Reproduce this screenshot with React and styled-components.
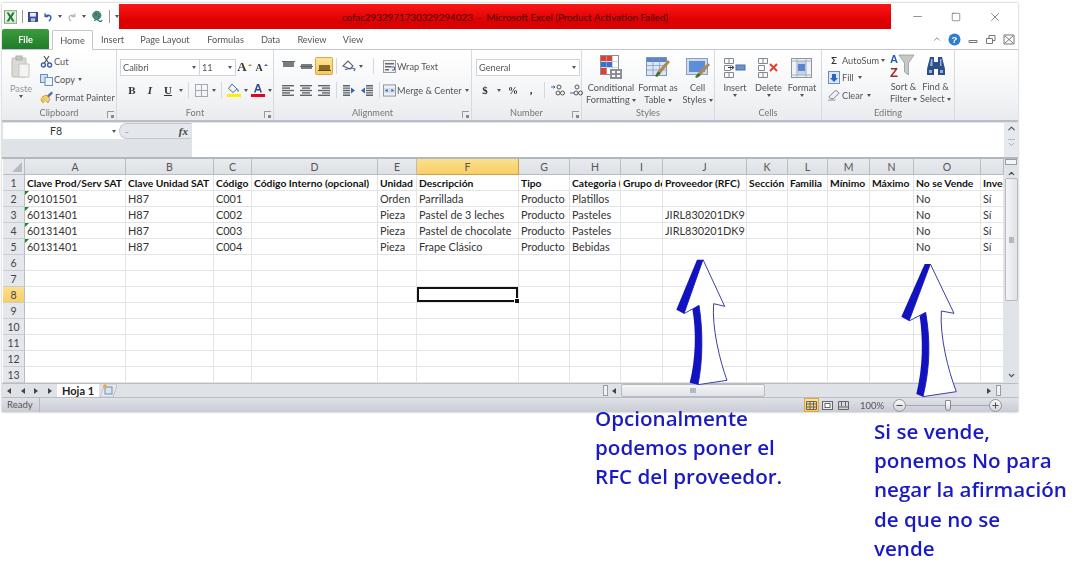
import React from "react"
import styled, { createGlobalStyle } from "styled-components"
import { ChevronUp, ChevronDown, Minus, Plus, X, Square } from "lucide-react"

const Global = createGlobalStyle`
  html, body { margin: 0; padding: 0; background: #fff; }
  body { font-family: "Lato", "Open Sans", sans-serif; overflow: hidden; }
  * { box-sizing: border-box; }
`

const Page = styled.div`
  position: relative;
  width: 1085px;
  height: 576px;
  padding-top: 3px;
  overflow: hidden;
`
const Win = styled.div`
  width: 1016px;
  margin-left: 2px;
  height: 409px;
  display: flex;
  flex-direction: column;
  background: #fff;
  box-shadow: 0 0 2px rgba(0,0,0,.35);
  color: #444;
  font-size: 9.2px;
  filter: blur(0.3px);
`
const TitleBar = styled.div`
  height: 27px;
  display: flex;
  align-items: center;
  flex: none;
`
const Qat = styled.div`
  width: 117px;
  padding-left: 2px;
  display: flex;
  align-items: center;
  gap: 5px;
`
const QatSep = styled.span`
  width: 1px;
  height: 13px;
  background: #999;
`
const RedTitle = styled.div`
  width: 772px;
  height: 25px;
  background: linear-gradient(#fb1616, #dc0000 70%);
  color: #4a0303;
  font-size: 9.8px;
  display: flex;
  align-items: center;
  justify-content: center;
  white-space: pre;
`
const WinBtns = styled.div`
  flex: 1;
  display: flex;
  justify-content: space-around;
  align-items: center;
  padding: 0 2px 0 6px;
  color: #333;
`
const Tabs = styled.div`
  height: 20px;
  flex: none;
  display: flex;
  align-items: flex-end;
  border-bottom: 1px solid #c2c7cd;
`
const FileTab = styled.div`
  width: 47px;
  height: 20px;
  margin-right: 3px;
  background: linear-gradient(#3c9c3c, #1e7d28);
  color: #fff;
  font-size: 9.2px;
  font-weight: 700;
  display: flex;
  align-items: center;
  justify-content: center;
  border-radius: 2px 2px 0 0;
`
const Tab = styled.div`
  height: 20px;
  width: ${p => p.$w}px;
  padding-top: 1px;
  display: flex;
  align-items: center;
  justify-content: center;
  color: #555;
  font-size: 9.2px;
  ${p => p.$on && `
    background: #fff;
    border: 1px solid #c2c7cd;
    border-bottom: 1px solid #fff;
    border-radius: 2px 2px 0 0;
    margin-bottom: -1px;
  `}
`
const TabRight = styled.div`
  margin-left: auto;
  height: 20px;
  display: flex;
  align-items: center;
  gap: 6px;
  padding-right: 3px;
`
const Ribbon = styled.div`
  height: 72px;
  flex: none;
  display: flex;
  background: linear-gradient(#fff, #f4f5f7 60%, #e9ebee);
  border-bottom: 2px solid #b9bec4;
`
const Group = styled.div`
  position: relative;
  width: ${p => p.$w}px;
  flex: none;
  display: flex;
  flex-direction: column;
  border-right: 1px solid #d7dbe0;
`
const GroupBody = styled.div`
  flex: 1;
  min-height: 0;
  display: flex;
  padding: ${p => p.$pad || "0"};
  gap: ${p => p.$gap || 0}px;
`
const GroupLabel = styled.div`
  height: 14px;
  flex: none;
  text-align: center;
  color: #777;
  font-size: 9.2px;
  line-height: 13px;
`
const Launcher = styled.span`
  position: absolute;
  right: 2px;
  bottom: 2px;
  width: 7px;
  height: 7px;
  border: 1px solid #999;
  border-width: 1px 0 0 1px;
  &::after {
    content: "";
    position: absolute;
    right: 0;
    bottom: 0;
    width: 3px;
    height: 3px;
    background: #888;
  }
`
const Caret = styled.span`
  display: inline-block;
  width: 0;
  height: 0;
  margin: 0 ${p => p.$m ?? 3}px;
  border: 2px solid transparent;
  border-top: 3px solid #555;
  border-bottom: 0;
  vertical-align: middle;
`
const UpMark = styled.span`
  width: 0;
  height: 0;
  margin: -5px 0 0 1px;
  border: 2px solid transparent;
  border-top: 0;
  border-bottom: 2px solid ${p => p.$c};
`
const BigBtn = styled.div`
  width: ${p => p.$w}px;
  flex: none;
  display: flex;
  flex-direction: column;
  align-items: center;
  padding-top: ${p => p.$top ?? 5}px;
  color: ${p => p.$dim ? "#999" : "#555"};
  font-size: 9.2px;
  line-height: 12px;
  text-align: center;
  white-space: nowrap;
`
const BigIcon = styled.div`
  height: ${p => p.$h || 25}px;
  margin-bottom: ${p => p.$mb ?? 2}px;
  display: flex;
  align-items: center;
  justify-content: center;
`
const Stack = styled.div`
  display: flex;
  flex-direction: column;
  flex: ${p => p.$flex ? 1 : "none"};
  width: ${p => p.$w ? p.$w + "px" : "auto"};
  padding-top: ${p => p.$top || 0}px;
`
const SmallBtn = styled.div`
  height: ${p => p.$h || 18}px;
  display: flex;
  align-items: center;
  gap: ${p => p.$gap ?? 2}px;
  color: #555;
  font-size: 9.2px;
  white-space: nowrap;
`
const ToolRow = styled.div`
  height: 18px;
  margin-top: ${p => p.$mt || 0}px;
  padding-left: ${p => p.$pl || 0}px;
  display: flex;
  align-items: center;
`
const Tool = styled.div`
  width: ${p => p.$w || 18}px;
  height: 18px;
  flex: none;
  display: flex;
  align-items: center;
  justify-content: center;
  font-family: "Liberation Serif", serif;
  font-weight: 700;
  font-style: ${p => p.$italic ? "italic" : "normal"};
  text-decoration: ${p => p.$under ? "underline" : "none"};
  font-size: ${p => p.$fs || 11}px;
  color: #333;
  ${p => p.$on && `
    background: linear-gradient(#fde49a, #fbc95c);
    border: 1px solid #d9a93f;
    border-radius: 2px;
  `}
`
const VSep = styled.span`
  width: 1px;
  height: 16px;
  margin: 0 ${p => p.$m ?? 3}px;
  background: #d4d7db;
  flex: none;
`
const Select = styled.div`
  width: ${p => p.$w}px;
  height: 17px;
  flex: none;
  display: flex;
  align-items: center;
  justify-content: space-between;
  padding-left: 2px;
  background: #fff;
  border: 1px solid #d0d4d9;
  margin-left: ${p => p.$ml || 0}px;
  color: #555;
  font-size: 9.2px;
`
const FormulaBar = styled.div`
  height: 37px;
  flex: none;
  display: flex;
  background: #dfe3e8;
  border-bottom: 2px solid #b3b8be;
  padding: 1px 0 0 1px;
`
const NameCol = styled.div`
  width: 188px;
  flex: none;
`
const NameBox = styled.div`
  height: 16px;
  display: flex;
  align-items: center;
  background: #fff;
  font-size: 10.5px;
  color: #333;
`
const NameText = styled.div`
  width: 106px;
  text-align: center;
`
const FxWrap = styled.div`
  flex: 1;
  height: 16px;
  display: flex;
  align-items: center;
  justify-content: space-between;
  background: #e4e7eb;
  border-radius: 8px 0 0 8px;
  border: 1px solid #c4c8cd;
  border-width: 1px 0 1px 1px;
  padding: 0 3px 0 5px;
  font-family: "Liberation Serif", serif;
  font-style: italic;
  font-weight: 700;
  font-size: 11px;
  color: #444;
`
const CollapseDash = styled.span`
  color: #aaa;
  font-style: normal;
`
const FormulaInput = styled.div`
  flex: 1;
  background: #fff;
  margin-left: 1px;
`
const SideScroll = styled.div`
  width: 14px;
  flex: none;
  display: flex;
  flex-direction: column;
  align-items: center;
  background: #e6e9ed;
  color: #555;
`
const Sheet = styled.div`
  flex: 1;
  display: flex;
  min-height: 0;
`
const GridWrap = styled.div`
  flex: none;
  width: 1001px;
  display: grid;
  grid-template-columns: ${p => p.$cols};
  grid-auto-rows: 16px;
  overflow: hidden;
  margin-left: 1px;
  background: #fff;
`
const Corner = styled.div`
  background: #e4e7eb;
  border-right: 1px solid #b9bdc3;
  border-bottom: 1px solid #b9bdc3;
  position: relative;
  &::after {
    content: "";
    position: absolute;
    right: 2px;
    bottom: 2px;
    border: 5px solid transparent;
    border-right-color: #b8bcc1;
    border-bottom-color: #b8bcc1;
  }
`
const ColHead = styled.div`
  display: flex;
  align-items: center;
  justify-content: center;
  font-size: 10.5px;
  color: #555;
  background: ${p => p.$on ? "linear-gradient(#fce08a, #f9ce6a)" : "linear-gradient(#e8ebee, #dde0e5)"};
  border-right: 1px solid ${p => p.$on ? "#c8a24a" : "#b9bdc3"};
  border-bottom: 1px solid ${p => p.$on ? "#c8a24a" : "#b9bdc3"};
`
const RowHead = styled.div`
  display: flex;
  align-items: center;
  justify-content: center;
  font-size: 10.5px;
  color: #444;
  background: ${p => p.$on ? "linear-gradient(#fce08a, #f9ce6a)" : "#e4e7eb"};
  border-right: 1px solid #b9bdc3;
  border-bottom: 1px solid #c9cdd2;
`
const Cell = styled.div`
  position: relative;
  padding-left: 2px;
  line-height: 16px;
  font-size: ${p => p.$bold ? 10.3 : 10.9}px;
  font-weight: ${p => p.$bold ? 700 : 400};
  color: ${p => p.$bold ? "#111" : "#333"};
  white-space: nowrap;
  overflow: hidden;
  border-right: 1px solid #e2e4e6;
  border-bottom: 1px solid #e2e4e6;
  ${p => p.$flag && `
    &::before {
      content: "";
      position: absolute;
      left: 0;
      top: 0;
      border: 2.500px solid transparent;
      border-top-color: #0f8a20;
      border-left-color: #0f8a20;
    }
  `}
  ${p => p.$sel && `
    overflow: visible;
    box-shadow: inset 0 0 0 2px #111;
    &::after {
      content: "";
      position: absolute;
      right: -2px;
      bottom: -2px;
      width: 4px;
      height: 4px;
      background: #111;
      border: 1px solid #fff;
    }
  `}
`
const VScroll = styled.div`
  width: 14px;
  flex: none;
  display: flex;
  flex-direction: column;
  align-items: center;
  background: #e0e3e8;
  color: #444;
`
const VSplit = styled.span`
  width: 12px;
  height: 6px;
  margin-bottom: 4px;
  background: #f4f5f7;
  border: 1px solid #9a9ea4;
  flex: none;
`
const Thumb = styled.div`
  width: 13px;
  height: 123px;
  margin-top: 0;
  background: linear-gradient(90deg, #f4f5f7, #dfe2e6);
  border: 1px solid #b7bbc1;
  border-radius: 2px;
  display: flex;
  align-items: center;
  justify-content: center;
  flex: none;
`
const Grip = styled.span`
  width: ${p => p.$w}px;
  height: ${p => p.$h}px;
  margin-top: ${p => p.$mt || 0}px;
  background: #b5b9bf;
  flex: none;
`
const DownEnd = styled.div`
  margin-top: auto;
  margin-bottom: 3px;
  display: flex;
`
const SheetBar = styled.div`
  height: 14px;
  flex: none;
  display: flex;
  align-items: center;
  background: #dfe3e8;
  border-top: 1px solid #b9bdc3;
`
const SheetNav = styled.div`
  width: 50px;
  padding-left: 5px;
  display: flex;
  justify-content: space-between;
  flex: none;
`
const Tri = styled.span`
  width: 0;
  height: 0;
  flex: none;
  margin-left: ${p => p.$ml || 0}px;
  border: 3px solid transparent;
  ${p => p.$left ? "border-right: 4px solid #444; border-left: 0;" : "border-left: 4px solid #444; border-right: 0;"}
`
const SheetTab = styled.div`
  width: 42px;
  height: 14px;
  margin-left: 5px;
  background: #fff;
  color: #222;
  font-weight: 700;
  font-size: 11px;
  text-align: center;
  line-height: 14px;
  flex: none;
`
const AddSheet = styled.div`
  margin-left: 1px;
  flex: none;
  display: flex;
`
const HScrollArea = styled.div`
  margin-left: 486px;
  flex: 1;
  display: flex;
  align-items: center;
  height: 13px;
`
const HSplit = styled.span`
  width: 5px;
  height: 11px;
  margin: ${p => p.$margin || 0};
  background: #f2f3f5;
  border: 1px solid #9a9ea4;
  flex: none;
`
const HThumb = styled.div`
  width: 144px;
  height: 13px;
  margin-left: 5px;
  background: linear-gradient(#f4f5f7, #dfe2e6);
  border: 1px solid #b7bbc1;
  border-radius: 2px;
  display: flex;
  align-items: center;
  justify-content: center;
  flex: none;
`
const Spacer = styled.span`
  flex: 1;
`
const StatusBar = styled.div`
  height: 15px;
  flex: none;
  display: flex;
  align-items: center;
  background: linear-gradient(#dfe3e8, #c9cdd3);
  border-top: 1px solid #b9bdc3;
  font-size: 9.5px;
  color: #555;
`
const Ready = styled.div`
  width: 38px;
  padding-left: 5px;
  height: 100%;
  line-height: 14px;
  border-right: 1px solid #b4b8be;
`
const ViewBtns = styled.div`
  margin-left: auto;
  display: flex;
  align-items: center;
  gap: 1px;
  height: 100%;
`
const ViewBtn = styled.div`
  width: 15px;
  height: 14px;
  display: flex;
  align-items: center;
  justify-content: center;
  ${p => p.$on && "background: linear-gradient(#fde49a, #fbc95c); border: 1px solid #d9a93f;"}
`
const ZoomPct = styled.div`
  margin-left: 9px;
  width: 33px;
`
const ZoomCircle = styled.div`
  width: 13px;
  height: 13px;
  border-radius: 50%;
  border: 1px solid #8f9399;
  background: linear-gradient(#fafafa, #d0d3d8);
  color: #444;
  display: flex;
  align-items: center;
  justify-content: center;
  flex: none;
`
const ZoomTrack = styled.div`
  position: relative;
  width: 83px;
  height: 1px;
  background: #a4a8ae;
  flex: none;
`
const ZoomKnob = styled.span`
  position: absolute;
  left: 39px;
  top: -5px;
  width: 6px;
  height: 11px;
  background: linear-gradient(#fff, #d4d7db);
  border: 1px solid #84888e;
  border-radius: 1px 1px 3px 3px;
`
const ZoomWrap = styled.div`
  display: flex;
  align-items: center;
  padding-right: 16px;
`
const Notes = styled.div`
  display: flex;
  align-items: flex-start;
  padding-left: 595px;
  margin-top: -8px;
  position: relative;
`
const Note = styled.div`
  width: ${p => p.$w}px;
  margin-top: ${p => p.$mt || 0}px;
  flex: none;
  color: #1a1ac4;
  font-family: "Open Sans", sans-serif;
  font-weight: 600;
  font-size: 20.6px;
  line-height: 29.2px;
  white-space: nowrap;
`
const ArrowBox = styled.svg`
  position: absolute;
  left: ${p => p.$x}px;
  top: ${p => p.$y}px;
  overflow: visible;
`
const SumMark = styled.span`
  width: 12px;
  font-weight: 700;
  color: #333;
  text-align: center;
`

const Upward = ({ x, y, w, h, box, head, shaft, body }) => (
  <ArrowBox $x={x} $y={y} width={w} height={h} viewBox={box}>
    <path d={body} fill="#fff" stroke="#3c3cae" strokeWidth="3" />
    <path d={head} fill="#1212c0" />
    <path d={shaft} fill="#1212c0" />
  </ArrowBox>
)

const ExcelLogo = () => (
  <svg width="16" height="16" viewBox="0 0 16 16">
    <rect x=".5" y=".5" width="15" height="15" fill="#e9f3e4" stroke="#5c8f5c" />
    <path d="M3 2.5h3l2 3.6 2-3.6h3L9.6 8 13 13.5h-3l-2-3.6-2 3.6H3L6.4 8z" fill="#1f7a35" />
  </svg>
)
const SaveIcon = () => (
  <svg width="12" height="12" viewBox="0 0 12 12">
    <rect x=".5" y=".5" width="11" height="11" fill="#3c4fa0" stroke="#2a3570" />
    <rect x="2.5" y="1" width="7" height="4.5" fill="#e8ecf6" />
    <rect x="3.5" y="7.5" width="5" height="4" fill="#b8c0dc" />
  </svg>
)
const UndoIcon = () => (
  <svg width="12" height="12" viewBox="0 0 12 12" fill="none">
    <path d="M2.5 1.5v4h4" stroke="#2f5fb0" strokeWidth="1.6" />
    <path d="M2.8 5.2C5 3 9.5 3.5 9.5 7c0 1.8-1 3-2.5 3.8" stroke="#2f5fb0" strokeWidth="1.8" />
  </svg>
)
const RedoIcon = () => (
  <svg width="12" height="12" viewBox="0 0 12 12" fill="none">
    <path d="M9.5 1.5v4h-4" stroke="#b4b8bc" strokeWidth="1.4" />
    <path d="M9.2 5.2C7 3 2.5 3.5 2.5 7c0 1.8 1 3 2.5 3.8" stroke="#b4b8bc" strokeWidth="1.6" />
  </svg>
)
const GlobeIcon = () => (
  <svg width="16" height="16" viewBox="0 0 16 16">
    <circle cx="7" cy="6" r="5" fill="#4f8f5a" stroke="#2f6a80" />
    <path d="M4 3.5 7 3l1 2-2 2zM8 7l2-1 .8 1.5L9 9z" fill="#2e6ab0" />
    <path d="M4 12.5c2-1.8 3.6-1.8 5.5 0s3 .8 4-.6" fill="none" stroke="#3b6fa0" strokeWidth="1.6" />
  </svg>
)
const PasteIcon = () => (
  <svg width="20" height="24" viewBox="0 0 20 24">
    <rect x="1" y="3" width="14" height="19" rx="1" fill="#d9d9d6" stroke="#bdbdb9" />
    <rect x="5" y="1" width="6" height="4" fill="#c6c6c2" stroke="#aeaeaa" />
    <path d="M8 9h10v13H8z" fill="#f4f4f2" stroke="#c4c4c2" />
  </svg>
)
const CutIcon = () => (
  <svg width="13" height="13" viewBox="0 0 13 13" fill="none">
    <path d="M4 1l4.6 7M9 1 4.4 8" stroke="#555" strokeWidth="1.2" />
    <circle cx="3.4" cy="10" r="2" stroke="#3b62a8" strokeWidth="1.4" />
    <circle cx="9.6" cy="10" r="2" stroke="#3b62a8" strokeWidth="1.4" />
  </svg>
)
const CopyIcon = () => (
  <svg width="13" height="13" viewBox="0 0 13 13">
    <rect x=".5" y="1.5" width="7" height="8" fill="#cfe0f4" stroke="#6a8fbc" />
    <rect x="5" y="4.5" width="7.5" height="8" fill="#eef4fb" stroke="#6a8fbc" />
  </svg>
)
const PainterIcon = () => (
  <svg width="14" height="13" viewBox="0 0 14 13">
    <path d="M1 6.5 5 10.5 3 12.5 0.5 9.5z" fill="#e8b23a" />
    <path d="M2 6l4-2 4 4-2 4z" fill="#f4d36a" stroke="#a87e1e" strokeWidth=".6" />
    <path d="M7 4.5 11.5.5l1.5 1.5L9 6.5z" fill="#5a6ea0" />
  </svg>
)
const Bars = ({ rows }) => (
  <svg width="13" height="11" viewBox="0 0 13 11">
    {rows.map(([x, y, w, h, c], i) => <rect key={i} x={x} y={y} width={w} height={h} fill={c || "#60656c"} />)}
  </svg>
)
const barFill = "#787d84"
const AlignTop = () => <Bars rows={[[1, 1, 11, 5, barFill], [0, 0, 13, 1]]} />
const AlignMid = () => <Bars rows={[[1, 3, 11, 5, barFill], [0, 5, 13, 1]]} />
const AlignBot = () => <Bars rows={[[1, 4, 11, 5, "#8a6a20"], [0, 9, 13, 1, "#5a4a20"]]} />
const AlignL = () => <Bars rows={[[0, 0, 12, 1.4], [0, 2.4, 8, 1.4], [0, 4.8, 12, 1.4], [0, 7.2, 8, 1.4], [0, 9.6, 12, 1.4]]} />
const AlignC = () => <Bars rows={[[0, 0, 12, 1.4], [2, 2.4, 8, 1.4], [0, 4.8, 12, 1.4], [2, 7.2, 8, 1.4], [0, 9.6, 12, 1.4]]} />
const AlignR = () => <Bars rows={[[0, 0, 12, 1.4], [4, 2.4, 8, 1.4], [0, 4.8, 12, 1.4], [4, 7.2, 8, 1.4], [0, 9.6, 12, 1.4]]} />
const Indent = ({ flip }) => (
  <svg width="12" height="11" viewBox="0 0 12 11">
    <g transform={flip ? "translate(12 0) scale(-1 1)" : undefined}>
      <path d="M5 0h7v1.4H5zM5 2.4h7v1.4H5zM5 4.8h7v1.4H5zM5 7.2h7v1.4H5zM5 9.6h7V11H5z" fill="#5c6168" />
      <path d="M0 5.5 4 2.5v6z" fill="#3c64ac" />
    </g>
  </svg>
)
const Orient = () => (
  <svg width="14" height="12" viewBox="0 0 14 12" fill="none">
    <path d="M1 6 6 1l5 5-3 3z" stroke="#666" strokeWidth="1.1" />
    <path d="M3 9.5l7-1.5 3 1-1 2" stroke="#3c64ac" strokeWidth="1.2" />
  </svg>
)
const WrapIcon = () => (
  <svg width="13" height="13" viewBox="0 0 13 13">
    <rect x=".5" y=".5" width="12" height="12" fill="#f2f2f2" stroke="#9a9a9a" />
    <path d="M2 3h9v1.5H2zM2 6h6v1.5H2zM2 9h4v1.5H2z" fill="#6a6a6a" />
    <path d="M8 7h3.5v3H9" stroke="#3c64ac" fill="none" />
  </svg>
)
const MergeIcon = () => (
  <svg width="13" height="13" viewBox="0 0 14 13">
    <rect x=".5" y=".5" width="13" height="12" fill="#eef0f2" stroke="#8a8f96" />
    <rect x="1" y="4" width="12" height="5" fill="#cfdcef" />
    <path d="M2 6.5 5 5v3zM12 6.5 9 5v3z" fill="#3c64ac" />
  </svg>
)
const BorderIcon = () => (
  <svg width="13" height="13" viewBox="0 0 13 13" fill="none" stroke="#a4a8ae">
    <rect x=".5" y=".5" width="12" height="12" />
    <path d="M6.5 .5v12M.5 6.5h12" />
  </svg>
)
const FillColor = () => (
  <svg width="14" height="14" viewBox="0 0 14 14">
    <path d="M5 1 10 6 6 9.500 1.500 5.500z" fill="#f0f2f5" stroke="#4a6fa8" />
    <path d="M10.500 5.500c1 1.500 1.800 2.300 1 3-.9.500-1.600-.5-1-3z" fill="#3c64ac" />
    <rect x="0" y="11" width="14" height="3" fill="#ffee00" />
  </svg>
)
const FontColor = () => (
  <svg width="14" height="14" viewBox="0 0 14 14">
    <path d="M6 1h2l3 8.500H9.300L8.700 7.500H5.300L4.700 9.500H3zM5.800 6h2.400L7 2.800z" fill="#2a4d8f" />
    <rect x="0" y="11" width="14" height="3" fill="#e8001c" />
  </svg>
)
const Decimals = ({ up }) => (
  <svg width="14" height="12" viewBox="0 0 14 12">
    <path d={up ? "M0 3h4l-1.500-1.500M4 3 2.500 4.500" : "M1 9h4"} stroke="#3c64ac" fill="none" />
    <circle cx="8" cy="3" r="2" fill="none" stroke="#555" />
    <circle cx="11.500" cy="9" r="2" fill="none" stroke="#555" />
    <circle cx="7" cy="9" r="2" fill="none" stroke="#555" />
  </svg>
)
const CondFormat = () => (
  <svg width="22" height="25" viewBox="0 0 22 25">
    <rect x=".5" y=".5" width="18" height="19" fill="#fff" stroke="#8a8f96" />
    <rect x="1" y="1" width="5" height="5" fill="#e04030" />
    <rect x="6" y="1" width="6" height="5" fill="#e04030" />
    <rect x="1" y="7" width="11" height="5" fill="#3a70d0" />
    <rect x="1" y="13" width="6" height="6" fill="#e04030" />
    <path d="M6.500 1v18M12.500 1v18M1 6.500h18M1 12.500h18" stroke="#b4b8bd" strokeWidth=".6" />
    <rect x="10" y="14" width="12" height="10" fill="#8a8f96" />
    <path d="M12 16h3v2h-3zM17 16h3v2h-3zM12 20h3v2h-3zM17 20h3v2h-3z" fill="#fff" />
  </svg>
)
const FormatTable = () => (
  <svg width="24" height="24" viewBox="0 0 24 24">
    <rect x=".5" y="1.500" width="20" height="18" fill="#dbe6f6" stroke="#7e94b8" />
    <rect x="1" y="2" width="19" height="4" fill="#5c84c8" />
    <path d="M7 2v17M13.500 2v17M1 9.500h19M1 14h19" stroke="#7e94b8" strokeWidth=".7" />
    <path d="M22 4 24 6 15 17l-3-2z" fill="#b08a50" />
    <path d="M12 15l3 2-4 4-2-1z" fill="#4c6a3c" />
  </svg>
)
const CellStyles = () => (
  <svg width="24" height="24" viewBox="0 0 24 24">
    <rect x=".5" y="2.500" width="21" height="16" fill="#cfdcf0" stroke="#8ba0c0" />
    <rect x="3" y="5" width="16" height="11" fill="#5f8ed8" />
    <path d="M22 7 24 9 15 19l-3-2z" fill="#b08a50" />
    <path d="M12 17l3 2-4 3-2-1z" fill="#4c6a3c" />
  </svg>
)
const CellsIcon = ({ kind }) => (
  <svg width="24" height="22" viewBox="0 0 24 22" fill="none">
    {kind !== "format" && (
      <>
        <path d="M1.500 1.500h9v5h-9zM1.500 15.500h9v5h-9zM1.500 8.500h6v5h-6zM6 15.500v5M6 1.500v5" stroke="#808890" />
        {kind === "insert"
          ? <><rect x="13" y="8" width="9" height="5" fill="#6c90cc" stroke="#4e70a8" /><path d="M5 10.500h6M11 10.500 8.500 8.500M11 10.500 8.500 12.500" stroke="#3a3a3a" /></>
          : <path d="M13 7l7 7M20 7l-7 7" stroke="#e04030" strokeWidth="2" />}
      </>
    )}
    {kind === "format" && (
      <>
        <rect x="1.500" y="1.500" width="20" height="19" fill="#eef1f5" stroke="#8d949c" />
        <rect x="7" y="4" width="9" height="14" fill="#c4d4ec" />
        <rect x="8" y="7" width="7" height="7" fill="#5c84d0" />
        <path d="M7 1.500v19M16 1.500v19M1.500 4h20M1.500 18h20" stroke="#a8aeb6" />
      </>
    )}
  </svg>
)
const FillDown = () => (
  <svg width="12" height="13" viewBox="0 0 12 13">
    <rect x=".5" y=".5" width="11" height="12" fill="#dce8f8" stroke="#6a8fbc" />
    <path d="M4 3h4v4h2L6 11 2 7h2z" fill="#2d62c0" />
  </svg>
)
const Eraser = () => (
  <svg width="12" height="12" viewBox="0 0 13 12">
    <path d="M1 8 7 2c1-1 2-1 3 0l2 2-6 6H3z" fill="#f1eff6" stroke="#6f6f8c" />
    <path d="M0 11.500h8" stroke="#8a8a96" />
  </svg>
)
const SortIcon = () => (
  <svg width="28" height="27" viewBox="0 0 28 27">
    <path d="M9 3h15l-5.500 8v12l-4-3v-9z" fill="#c6c8c8" stroke="#8d9090" strokeWidth=".7" />
    <text x="0" y="11" fontFamily="Liberation Sans, sans-serif" fontWeight="700" fontSize="11" fill="#2f5faa">A</text>
    <text x="0" y="25" fontFamily="Liberation Sans, sans-serif" fontWeight="700" fontSize="13" fill="#a42a2a">Z</text>
  </svg>
)
const Binocs = () => (
  <svg width="20" height="20" viewBox="0 0 20 20">
    <path d="M4 1h4v5h4V1h4l3 12v6h-7v-6H8v6H1v-6z" fill="#2e4f86" />
    <path d="M5 3h1.500v7H4zM14 3h1.500v7H14zM3 14h3v3H3zM14 14h3v3h-3z" fill="#8db0e0" />
  </svg>
)
const HelpIcon = () => (
  <svg width="13" height="13" viewBox="0 0 13 13">
    <circle cx="6.500" cy="6.500" r="6" fill="#2f7cd0" />
    <text x="6.500" y="10" textAnchor="middle" fontSize="9.500" fontWeight="700" fontFamily="Liberation Sans, sans-serif" fill="#fff">?</text>
  </svg>
)
const Glyph = ({ d }) => (
  <svg width="12" height="11" viewBox="0 0 12 11" fill="none" stroke="#777"><path d={d} /></svg>
)
const NewSheet = () => (
  <svg width="17" height="13" viewBox="0 0 17 13">
    <path d="M0 13 5 0h12v1L13 13z" fill="#e8ebee" stroke="#a4a8ae" strokeWidth=".6" />
    <rect x="5" y="3" width="7" height="7" fill="#d8e4f4" stroke="#6a8fbc" />
    <circle cx="5" cy="2.500" r="2" fill="#f0a83a" />
  </svg>
)
const GridView = () => (
  <svg width="11" height="9" viewBox="0 0 11 9" fill="none" stroke="#666"><path d="M.5.5h10v8H.5zM.5 3h10M.5 6h10M4 .5v8M7.500.5v8" /></svg>
)
const PageView = () => (
  <svg width="11" height="9" viewBox="0 0 11 9" fill="#e8eaed" stroke="#666"><rect x=".5" y=".5" width="10" height="8" /><rect x="3" y="2.500" width="5" height="4" fill="#fff" /></svg>
)
const BreakView = () => (
  <svg width="11" height="9" viewBox="0 0 11 9" fill="none" stroke="#666"><path d="M.5.500h10v8H.5zM3.500 .5v5M7.500.5v5M.5 6h10" /></svg>
)

const colNames = "ABCDEFGHIJKLMNOP".split("")
const colWidths = [101, 88, 38, 126, 39, 102, 51, 51, 42, 84, 41, 40, 42, 44, 67, 23]
const data = [
  ["Clave Prod/Serv SAT", "Clave Unidad SAT", "Código", "Código Interno (opcional)", "Unidad", "Descripción", "Tipo", "Categoria (opcional)", "Grupo de", "Proveedor (RFC)", "Sección", "Familia", "Mínimo", "Máximo", "No se Vende", "Inventario"],
  ["90101501", "H87", "C001", "", "Orden", "Parrillada", "Producto", "Platillos", "", "", "", "", "", "", "No", "Sí"],
  ["60131401", "H87", "C002", "", "Pieza", "Pastel de 3 leches", "Producto", "Pasteles", "", "JIRL830201DK9", "", "", "", "", "No", "Sí"],
  ["60131401", "H87", "C003", "", "Pieza", "Pastel de chocolate", "Producto", "Pasteles", "", "JIRL830201DK9", "", "", "", "", "No", "Sí"],
  ["60131401", "H87", "C004", "", "Pieza", "Frape Clásico", "Producto", "Bebidas", "", "", "", "", "", "", "No", "Sí"],
]
const rowNums = Array.from({ length: 13 }, (_, i) => i + 1)

const RibbonGroup = ({ w, label, launcher, pad, gap, children }) => (
  <Group $w={w}>
    <GroupBody $pad={pad} $gap={gap}>{children}</GroupBody>
    <GroupLabel>{label}</GroupLabel>
    {launcher && <Launcher />}
  </Group>
)

export default function App() {
  return (
    <Page>
      <Global />
      <Win>
        <TitleBar>
          <Qat>
            <ExcelLogo />
            <QatSep />
            <SaveIcon />
            <UndoIcon />
            <Caret $m={0} />
            <RedoIcon />
            <Caret $m={0} />
            <GlobeIcon />
            <QatSep />
            <Caret $m={0} />
          </Qat>
          <RedTitle>cofac2932971730329294023  -  Microsoft Excel (Product Activation Failed)</RedTitle>
          <WinBtns>
            <Minus size={13} strokeWidth={1} />
            <Square size={10} strokeWidth={1.2} />
            <X size={14} strokeWidth={1} />
          </WinBtns>
        </TitleBar>
        <Tabs>
          <FileTab>File</FileTab>
          <Tab $on $w={41}>Home</Tab>
          <Tab $w={39}>Insert</Tab>
          <Tab $w={66}>Page Layout</Tab>
          <Tab $w={55}>Formulas</Tab>
          <Tab $w={35}>Data</Tab>
          <Tab $w={48}>Review</Tab>
          <Tab $w={34}>View</Tab>
          <TabRight>
            <ChevronUp size={10} color="#777" />
            <HelpIcon />
            <Glyph d="M2 6.500h8v2H2z" />
            <Glyph d="M1.500 4.500h6v5h-6zM4 4.500v-3h6v5H7.500" />
            <Glyph d="M2 2l8 7M10 2 2 9M1 1h10v9H1z" />
          </TabRight>
        </Tabs>
        <Ribbon>
          <RibbonGroup w={115} label="Clipboard" launcher>
            <BigBtn $w={38} $dim $top={4}>
              <BigIcon $h={26} $mb={3}><PasteIcon /></BigIcon>
              Paste
              <Caret />
            </BigBtn>
            <Stack $top={2}>
              <SmallBtn $gap={1}><CutIcon /> Cut</SmallBtn>
              <SmallBtn $gap={1}><CopyIcon /> Copy <Caret $m={2} /></SmallBtn>
              <SmallBtn $gap={1}><PainterIcon /> Format Painter</SmallBtn>
            </Stack>
          </RibbonGroup>
          <RibbonGroup w={157} label="Font" launcher pad="0 0 0 3px">
            <Stack $top={8} $flex>
              <ToolRow>
                <Select $w={80}>Calibri<Caret /></Select>
                <Select $w={37} $ml={-1}>11<Caret /></Select>
                <Tool $w={17} $fs={13}>A<UpMark $c="#c08a20" /></Tool>
                <Tool $w={17} $fs={10}>A<UpMark $c="#3c64ac" /></Tool>
              </ToolRow>
              <ToolRow $mt={5} $pl={3}>
                <Tool>B</Tool>
                <Tool $italic>I</Tool>
                <Tool $under>U</Tool>
                <Caret $m={2} />
                <VSep />
                <Tool><BorderIcon /></Tool>
                <Caret $m={2} />
                <VSep />
                <Tool><FillColor /></Tool>
                <Caret $m={1} />
                <Tool><FontColor /></Tool>
                <Caret $m={1} />
              </ToolRow>
            </Stack>
          </RibbonGroup>
          <RibbonGroup w={198} label="Alignment" launcher pad="0 0 0 5px">
            <Stack $top={7} $flex>
              <ToolRow>
                <Tool><AlignTop /></Tool>
                <Tool><AlignMid /></Tool>
                <Tool $on><AlignBot /></Tool>
                <VSep />
                <Tool><Orient /></Tool>
                <Caret $m={1} />
                <VSep $m={9} />
                <SmallBtn $gap={1}><WrapIcon /> Wrap Text</SmallBtn>
              </ToolRow>
              <ToolRow $mt={6}>
                <Tool><AlignL /></Tool>
                <Tool><AlignC /></Tool>
                <Tool><AlignR /></Tool>
                <VSep />
                <Tool><Indent flip /></Tool>
                <Tool><Indent /></Tool>
                <VSep />
                <SmallBtn $gap={1}><MergeIcon /> Merge &amp; Center <Caret $m={2} /></SmallBtn>
              </ToolRow>
            </Stack>
          </RibbonGroup>
          <RibbonGroup w={110} label="Number" launcher pad="0 0 0 4px">
            <Stack $top={8} $flex>
              <ToolRow>
                <Select $w={104}>General<Caret /></Select>
              </ToolRow>
              <ToolRow $mt={5}>
                <Tool>$</Tool>
                <Caret $m={3} />
                <Tool $fs={10}>%</Tool>
                <Tool>,</Tool>
                <VSep $m={4} />
                <Tool><Decimals up /></Tool>
                <Tool><Decimals /></Tool>
              </ToolRow>
            </Stack>
          </RibbonGroup>
          <RibbonGroup w={133} label="Styles" pad="0 0 0 4px">
            <BigBtn $w={50}>
              <BigIcon><CondFormat /></BigIcon>
              Conditional
              <span>Formatting <Caret $m={0} /></span>
            </BigBtn>
            <BigBtn $w={44}>
              <BigIcon><FormatTable /></BigIcon>
              Format as
              <span>Table <Caret $m={0} /></span>
            </BigBtn>
            <BigBtn $w={35}>
              <BigIcon><CellStyles /></BigIcon>
              Cell
              <span>Styles <Caret $m={0} /></span>
            </BigBtn>
          </RibbonGroup>
          <RibbonGroup w={107} label="Cells" pad="0 0 0 3px">
            <BigBtn $w={34}>
              <BigIcon><CellsIcon kind="insert" /></BigIcon>
              Insert
              <Caret />
            </BigBtn>
            <BigBtn $w={33}>
              <BigIcon><CellsIcon kind="delete" /></BigIcon>
              Delete
              <Caret />
            </BigBtn>
            <BigBtn $w={34}>
              <BigIcon><CellsIcon kind="format" /></BigIcon>
              Format
              <Caret />
            </BigBtn>
          </RibbonGroup>
          <RibbonGroup w={133} label="Editing" pad="0 0 0 6px">
            <Stack $top={1} $w={60}>
              <SmallBtn $h={18}><SumMark>Σ</SumMark> AutoSum <Caret $m={0} /></SmallBtn>
              <SmallBtn $h={17}><FillDown /> Fill <Caret $m={2} /></SmallBtn>
              <SmallBtn $h={18}><Eraser /> Clear <Caret $m={2} /></SmallBtn>
            </Stack>
            <BigBtn $w={31} $top={2}>
              <BigIcon $h={27}><SortIcon /></BigIcon>
              Sort &amp;
              <span>Filter <Caret $m={0} /></span>
            </BigBtn>
            <BigBtn $w={33} $top={2}>
              <BigIcon $h={27}><Binocs /></BigIcon>
              Find &amp;
              <span>Select <Caret $m={0} /></span>
            </BigBtn>
          </RibbonGroup>
        </Ribbon>
        <FormulaBar>
          <NameCol>
            <NameBox>
              <NameText>F8</NameText>
              <Caret $m={3} />
              <FxWrap>
                <CollapseDash>-</CollapseDash>
                <span>fx</span>
              </FxWrap>
            </NameBox>
          </NameCol>
          <FormulaInput />
          <SideScroll>
            <ChevronUp size={11} strokeWidth={2.5} />
            <Grip $w={7} $h={1} $mt={5} />
            <ChevronDown size={9} strokeWidth={2} color="#999" />
          </SideScroll>
        </FormulaBar>
        <Sheet>
          <GridWrap $cols={`22px ${colWidths.map(w => w + "px").join(" ")}`}>
            <Corner />
            {colNames.map(c => <ColHead key={c} $on={c === "F"}>{c === "P" ? "" : c}</ColHead>)}
            {rowNums.map(n => (
              <React.Fragment key={n}>
                <RowHead $on={n === 8}>{n}</RowHead>
                {colNames.map((c, i) => (
                  <Cell
                    key={c}
                    $bold={n === 1}
                    $flag={i === 0 && n > 1 && n < 6}
                    $sel={c === "F" && n === 8}
                  >
                    {data[n - 1] ? data[n - 1][i] : ""}
                  </Cell>
                ))}
              </React.Fragment>
            ))}
          </GridWrap>
          <VScroll>
            <VSplit />
            <ChevronUp size={9} strokeWidth={3} />
            <Thumb><Grip $w={5} $h={6} /></Thumb>
            <DownEnd><ChevronDown size={9} strokeWidth={3} /></DownEnd>
          </VScroll>
        </Sheet>
        <SheetBar>
          <SheetNav>
            <Tri $left />
            <Tri $left />
            <Tri />
            <Tri />
          </SheetNav>
          <SheetTab>Hoja 1</SheetTab>
          <AddSheet><NewSheet /></AddSheet>
          <HScrollArea>
            <HSplit />
            <Tri $left $ml={4} />
            <HThumb><Grip $w={6} $h={5} /></HThumb>
            <Spacer />
            <Tri />
            <HSplit $margin="0 17px 0 5px" />
          </HScrollArea>
        </SheetBar>
        <StatusBar>
          <Ready>Ready</Ready>
          <ViewBtns>
            <ViewBtn $on><GridView /></ViewBtn>
            <ViewBtn><PageView /></ViewBtn>
            <ViewBtn><BreakView /></ViewBtn>
          </ViewBtns>
          <ZoomPct>100%</ZoomPct>
          <ZoomWrap>
            <ZoomCircle><Minus size={9} strokeWidth={2.5} /></ZoomCircle>
            <ZoomTrack><ZoomKnob /></ZoomTrack>
            <ZoomCircle><Plus size={9} strokeWidth={2.5} /></ZoomCircle>
          </ZoomWrap>
        </StatusBar>
      </Win>
      <Notes>
        <Note $w={279}>Opcionalmente<br />podemos poner el<br />RFC del proveedor.</Note>
        <Note $w={205} $mt={13}>Si se vende,<br />ponemos No para<br />negar la afirmación<br />de que no se<br />vende</Note>
      </Notes>
      <Upward
        x={673.3} y={256.7} w={56.7} h={130} box="100 20 170 390"
        head="M172 28 L190 28 L133 190 L110 178 Z"
        shaft="M178 165 C190 240 190 330 175 403 L150 397 C168 330 170 240 158 177 Z"
        body="M190 28 L255 168 L222 160 C216 230 240 330 262 390 L175 403 C190 330 190 240 178 165 L133 190 Z"
      />
      <Upward
        x={898.3} y={260} w={61.7} h={140} box="775 30 185 420"
        head="M855 42 L872 42 L808 213 L785 200 Z"
        shaft="M858 187 C872 270 872 350 850 440 L830 432 C850 350 850 270 840 198 Z"
        body="M872 42 L943 190 L905 183 C900 260 925 360 950 425 L850 440 C872 350 872 270 858 187 L808 213 Z"
      />
    </Page>
  )
}
